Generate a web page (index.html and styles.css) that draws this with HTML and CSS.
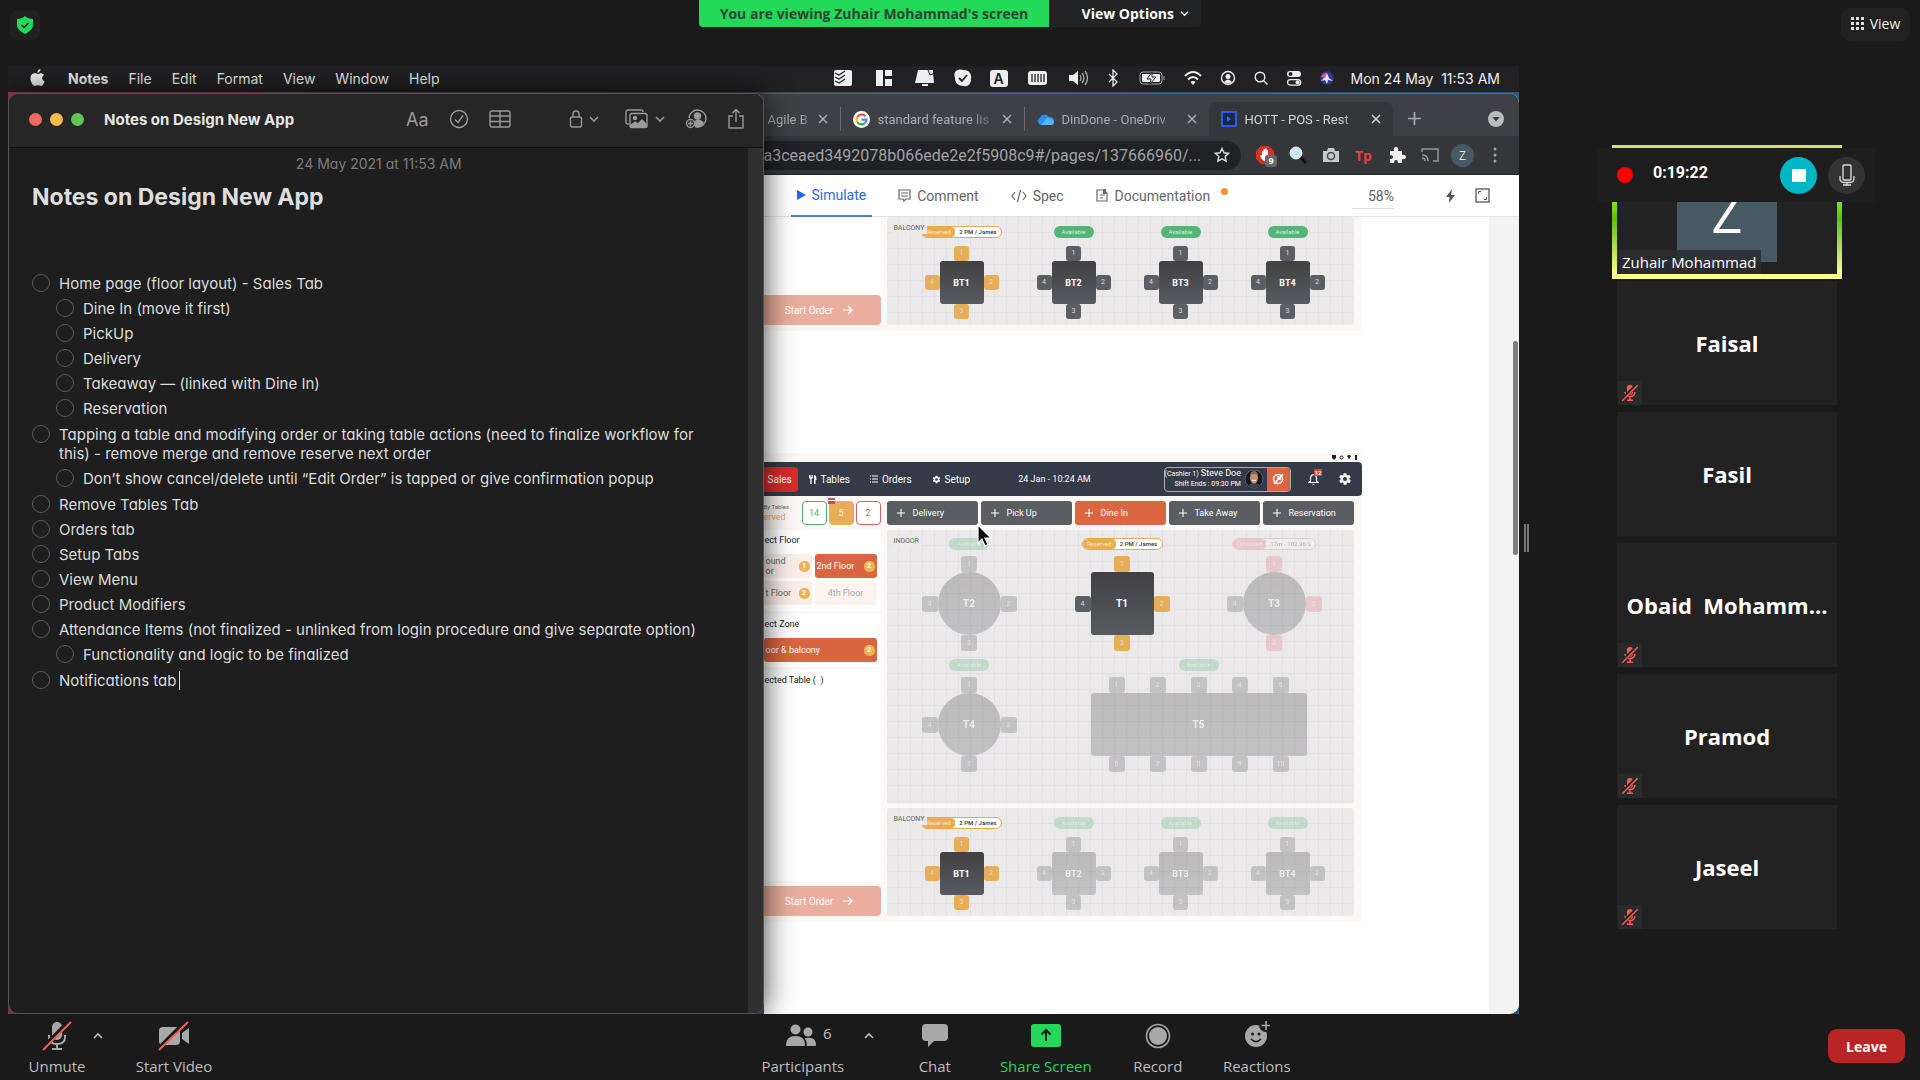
FILE: index.html
```html
<!DOCTYPE html>
<html lang="en">
<head>
<meta charset="utf-8">
<title>Meeting</title>
<link rel="stylesheet" href="styles.css">
</head>
<body>
<svg class="defs" aria-hidden="true">
  <symbol id="mic-off" viewBox="0 0 16 16"><rect x="5" y="0" width="6" height="10" rx="3" fill="#ff5c5c"/><path d="M3 7c0 6 10 6 10 0M8 12v3M5 15.200h6" stroke="#ff5c5c" stroke-width="1.500" fill="none"/><path d="M0 15L15 0" stroke="#242424" stroke-width="4"/><path d="M0 16L16 0" stroke="#ff5c5c" stroke-width="1.500"/></symbol>
  <symbol id="gear" viewBox="0 0 24 24"><path fill="currentColor" fill-rule="evenodd" d="M19.400 13a7.500 7.500 0 0 0 0-2l2.100-1.600a.5.5 0 0 0 .1-.7l-2-3.400a.5.5 0 0 0-.6-.2l-2.500 1a7 7 0 0 0-1.700-1l-.4-2.700A.5.5 0 0 0 14 2h-4a.5.5 0 0 0-.5.400l-.4 2.700a7 7 0 0 0-1.700 1l-2.500-1a.5.5 0 0 0-.6.200l-2 3.400a.5.5 0 0 0 .1.700L4.600 11a7.500 7.500 0 0 0 0 2l-2.100 1.600a.5.5 0 0 0-.1.700l2 3.400c.1.200.4.300.6.200l2.500-1a7 7 0 0 0 1.700 1l.4 2.700c0 .2.200.4.500.4h4c.3 0 .5-.2.500-.4l.4-2.700a7 7 0 0 0 1.700-1l2.500 1c.2.100.5 0 .6-.2l2-3.400a.5.5 0 0 0-.1-.7zM12 15.500a3.500 3.500 0 1 1 0-7 3.500 3.500 0 0 1 0 7z"/></symbol>
  <symbol id="down" viewBox="0 0 10 10"><path d="M1 3l4 4 4-4" fill="none" stroke="currentColor" stroke-width="1.600"/></symbol>
  <symbol id="up" viewBox="0 0 10 10"><path d="M1 7l4-4 4 4" fill="none" stroke="currentColor" stroke-width="1.600"/></symbol>
  <symbol id="close" viewBox="0 0 10 10"><path d="M1 1l8 8M9 1L1 9" stroke="currentColor" stroke-width="1.500"/></symbol>
  <symbol id="plus" viewBox="0 0 10 10"><path d="M5 0v10M0 5h10" stroke="currentColor" stroke-width="1.300"/></symbol>
  <symbol id="arrow" viewBox="0 0 10 10"><path d="M0 5h9M5 1l4 4-4 4" fill="none" stroke="currentColor" stroke-width="1.200"/></symbol>
</svg>

<header class="topbar">
  <button class="shield" aria-label="Meeting information"><svg width="16" height="18" viewBox="0 0 16 18"><path d="M8 0c2 2 5 3 8 3v6c0 4-4 7-8 9C4 16 0 13 0 9V3c3 0 6-1 8-3z" fill="#23d959"/><path d="M4.500 9l2.500 2.500L11.500 7" stroke="#1a1a1a" stroke-width="1.500" fill="none"/></svg></button>
  <div class="viewing">
    <span class="viewing-text">You are viewing Zuhair Mohammad's screen</span>
    <button class="viewing-options">View Options <svg width="9" height="9"><use href="#down"/></svg></button>
  </div>
  <button class="view-btn"><svg width="13" height="13" viewBox="0 0 13 13" fill="#ddd"><path d="M0 0h3v3H0zM5 0h3v3H5zM10 0h3v3h-3zM0 5h3v3H0zM5 5h3v3H5zM10 5h3v3h-3zM0 10h3v3H0zM5 10h3v3H5zM10 10h3v3h-3z"/></svg>View</button>
</header>

<main class="stage">
  <section class="desktop">
    <nav class="menubar">
      <svg width="15" height="18" viewBox="0 0 15 18" fill="#eee"><path d="M10.500 0c.1 2-1.400 3.700-3.200 3.700C7.200 2 8.700.3 10.500 0zM7.600 5c.8 0 1.700-.8 3.200-.8 1.200 0 2.400.6 3.200 1.700-2.700 1.600-2.300 5.300.7 6.500-.7 1.900-2.300 4.600-3.900 4.600-1.100 0-1.500-.7-2.900-.7s-1.900.7-2.900.7C3 17 .4 12.700.4 9.300.4 6 2.500 4.300 4.600 4.300 6 4.300 6.900 5 7.600 5z"/></svg>
      <a href="#" class="app-name">Notes</a><a href="#">File</a><a href="#">Edit</a><a href="#">Format</a><a href="#">View</a><a href="#">Window</a><a href="#">Help</a>
      <div class="tray">
        <svg width="22" height="18" viewBox="0 0 22 18"><rect x="2" y="1" width="18" height="16" rx="2" fill="#eee"/><path d="M3 4l4 2 6-4M3 8l4 2 6-4M3 12l4 2 6-4" stroke="#222" stroke-width="1.300" fill="none"/></svg>
        <svg width="24" height="18" viewBox="0 0 24 18" fill="#eee"><path d="M4 1h7v16H4zM13 1h7v6h-7zM13 10h7v7h-7z"/></svg>
        <svg width="22" height="18" viewBox="0 0 22 18" fill="#eee"><path d="M4 1h15v3l1 10H1zM8 15h6v2H8z"/><path d="M14 1l2 5 3-1" stroke="#222" fill="none"/></svg>
        <svg width="18" height="18" viewBox="0 0 18 18"><path d="M4 1c3-1 4 0 6 0 5 0 8 4 7 9 0 5-3 8-7 7-6 0-9-3-9-8C0 6 0 2 4 1z" fill="#eee"/><path d="M5 9l3 3 5-6" stroke="#222" stroke-width="1.800" fill="none"/></svg>
        <span class="tray-a">A</span>
        <svg width="24" height="18" viewBox="0 0 24 18"><rect x="2" y="2" width="19" height="14" rx="3" fill="#eee"/><path d="M6 5v8M9 5v8M12 5v8M15 5v8M18 5v8" stroke="#222" stroke-width="1.300"/></svg>
        <svg width="20" height="18" viewBox="0 0 20 18"><path d="M1 6h4l5-4v14l-5-4H1z" fill="#eee"/><path d="M12 6q2 3 0 6M14 4q4 5 0 10M17 2q5 7 0 14" stroke="#aaa" stroke-width="1.300" fill="none"/></svg>
        <svg width="14" height="18" viewBox="0 0 14 18"><path d="M3 5l8 8-4 4V1l4 4-8 8" stroke="#eee" stroke-width="1.300" fill="none"/></svg>
        <svg width="28" height="18" viewBox="0 0 28 18"><rect x="2" y="3" width="22" height="12" rx="3" stroke="#aaa" fill="none"/><rect x="4" y="5" width="18" height="8" rx="1" fill="#eee"/><path d="M14 3l-5 7h4l-1 5 6-7h-4z" fill="#eee" stroke="#222"/><path d="M26 7v4" stroke="#aaa"/></svg>
        <svg width="18" height="18" viewBox="0 0 18 18"><path d="M1 7q8-8 16 0M4 10.500q5-5 10 0" stroke="#eee" stroke-width="2" fill="none"/><path d="M6.500 13q2.500-2 5 0L9 16z" fill="#eee"/></svg>
        <svg width="16" height="18" viewBox="0 0 16 18"><circle cx="8" cy="9" r="6.500" stroke="#eee" stroke-width="1.400" fill="none"/><circle cx="8" cy="7.500" r="2.500" fill="#eee"/><path d="M4 13q4-5 8 0-4 3-8 0z" fill="#eee"/></svg>
        <svg width="14" height="18" viewBox="0 0 14 18"><circle cx="6" cy="8" r="4.800" stroke="#eee" stroke-width="1.400" fill="none"/><path d="M9.500 11.500l4 4" stroke="#eee" stroke-width="1.500"/></svg>
        <svg width="16" height="18" viewBox="0 0 16 18"><rect x="1" y="2" width="14" height="6" rx="3" fill="#eee"/><rect x="1.600" y="10.600" width="13" height="5.500" rx="2.700" fill="none" stroke="#eee" stroke-width="1.300"/><circle cx="4.500" cy="5" r="2" fill="#222"/><circle cx="11.500" cy="13.300" r="2" fill="#eee"/></svg>
        <svg width="14" height="18" viewBox="0 0 14 18"><circle cx="7" cy="9" r="6.800" fill="#36358c"/><path d="M7 4l2 5 4 3-5-1-1 4-2-4-4 1 4-4z" fill="#d5ecff"/><path d="M1 8q3-5 6-4L5 9z" fill="#d658a5"/></svg>
      </div>
      <span class="clock">Mon 24 May&nbsp; 11:53 AM</span>
    </nav>

    <div class="windows">
      <article class="notes">
        <header class="notes-bar">
          <i class="light red"></i><i class="light amber"></i><i class="light green"></i>
          <h1>Notes on Design New App</h1>
          <div class="notes-tools">
            <button class="format">Aa</button>
            <button aria-label="Checklist"><svg width="20" height="20" viewBox="0 0 20 20" fill="none" stroke="currentColor" stroke-width="1.400"><circle cx="10" cy="10" r="8.500"/><path d="M6 10.500l3 3 5-7"/></svg></button>
            <button class="table-tool" aria-label="Table"><svg width="22" height="18" viewBox="0 0 22 18" fill="none" stroke="currentColor" stroke-width="1.400"><rect x="1" y="1" width="20" height="16" rx="2"/><path d="M1 6h20M1 11.500h20M11 1v16"/></svg></button>
            <button class="lock-tool" aria-label="Lock"><svg width="14" height="20" viewBox="0 0 14 20" fill="none" stroke="currentColor" stroke-width="1.400"><rect x="1.500" y="8" width="11" height="10" rx="1.500"/><path d="M4 8V5q0-3 3-3t3 3v3"/></svg><svg width="10" height="10"><use href="#down"/></svg></button>
            <button aria-label="Media"><svg width="24" height="20" viewBox="0 0 24 20" fill="none" stroke="currentColor" stroke-width="1.400"><path d="M4 15H3q-2 0-2-2V3q0-2 2-2h13q2 0 2 2"/><rect x="5" y="4.500" width="17" height="14" rx="2"/><circle cx="10" cy="9" r="1.500" fill="currentColor"/><path d="M6 16l4-3 3 2 4-4 4 4v3H6z" fill="currentColor"/></svg><svg width="10" height="10"><use href="#down"/></svg></button>
            <button aria-label="Share note"><svg width="22" height="20" viewBox="0 0 22 20" fill="none" stroke="currentColor" stroke-width="1.400"><path d="M4 9a8.500 8.500 0 1 1 8 9"/><circle cx="12.500" cy="7" r="3" fill="currentColor"/><path d="M10 16q-1-4 3-5 4 1 5 3-3 4-7 4z" fill="currentColor"/><circle cx="5.500" cy="14.500" r="4"/><path d="M5.500 12v5M3 14.500h5"/></svg></button>
            <button aria-label="Export"><svg width="18" height="22" viewBox="0 0 18 22" fill="none" stroke="currentColor" stroke-width="1.400"><path d="M6 8H2v12h14V8h-4M9 14V1.500M5.500 5L9 1.500 12.500 5"/></svg></button>
          </div>
        </header>
        <div class="notes-page">
          <time>24 May 2021 at 11:53 AM</time>
          <h2>Notes on Design New App</h2>
          <ul class="checklist">
            <li>Home page (floor layout) - Sales Tab</li>
            <li class="sub">Dine In (move it first)</li>
            <li class="sub">PickUp</li>
            <li class="sub">Delivery</li>
            <li class="sub">Takeaway — (linked with Dine In)</li>
            <li class="sub last">Reservation</li>
            <li>Tapping a table and modifying order or taking table actions (need to finalize workflow for<br>this) - remove merge and remove reserve next order</li>
            <li class="sub last">Don’t show cancel/delete until “Edit Order” is tapped or give confirmation popup</li>
            <li>Remove Tables Tab</li>
            <li>Orders tab</li>
            <li>Setup Tabs</li>
            <li>View Menu</li>
            <li>Product Modifiers</li>
            <li>Attendance Items (not finalized - unlinked from login procedure and give separate option)</li>
            <li class="sub last">Functionality and logic to be finalized</li>
            <li><span class="caret">Notifications tab</span></li>
          </ul>
        </div>
      </article>

      <article class="browser">
        <div class="tabs">
          <div class="tab first"><span>Agile B</span><svg width="10" height="10"><use href="#close"/></svg></div>
          <div class="tab"><svg width="17" height="17" viewBox="0 0 18 18"><circle cx="9" cy="9" r="9" fill="#fff"/><g fill="none" stroke-width="2.300"><path d="M13 5.500A5.200 5.200 0 0 0 4.600 6.300" stroke="#ea4335"/><path d="M4.600 6.300a5.200 5.200 0 0 0 0 5.400" stroke="#fbbc05"/><path d="M4.600 11.700a5.200 5.200 0 0 0 8 1.100" stroke="#34a853"/><path d="M12.600 12.800a5.200 5.200 0 0 0 1.600-3.600H9" stroke="#4285f4"/></g></svg><span>standard feature lis</span><svg width="10" height="10"><use href="#close"/></svg></div>
          <div class="tab"><svg width="17" height="12" viewBox="0 0 17 12"><path d="M4 12a4 4 0 0 1-1-7.500A5 5 0 0 1 12 4a4 4 0 0 1 2 8z" fill="#2a8fe6"/><path d="M4 12L10 5q5 0 7 4 0 3-3 3z" fill="#57b4f5"/></svg><span>DinDone - OneDriv</span><svg width="10" height="10"><use href="#close"/></svg></div>
          <div class="tab active"><svg width="16" height="16" viewBox="0 0 16 16"><rect x="1" y="1" width="14" height="14" fill="#1b2747" stroke="#2f5be8" stroke-width="2"/><path d="M6 5l4 3-4 3z" fill="#2f6bff"/></svg><span>HOTT - POS - Rest</span><svg width="10" height="10"><use href="#close"/></svg></div>
          <button class="new-tab" aria-label="New tab"><svg width="13" height="13" viewBox="0 0 10 10"><use href="#plus"/></svg></button>
          <svg class="tab-menu" width="16" height="16" viewBox="0 0 16 16"><circle cx="8" cy="8" r="8" fill="#b9babd"/><path d="M4.500 6h7L8 10.500z" fill="#35363a"/></svg>
        </div>
        <div class="address">
          <div class="url"><span>a3ceaed3492078b066ede2e2f5908c9#/pages/137666960/...</span><svg width="16" height="16" viewBox="0 0 16 16"><path d="M8 1.500l2 4.300 4.600.5-3.400 3.200.9 4.700L8 11.900l-4.100 2.300.9-4.700L1.400 6.300 6 5.800z" fill="none" stroke="#ddd" stroke-width="1.400"/></svg></div>
          <div class="extensions">
            <span class="blocker"><svg width="18" height="18" viewBox="0 0 18 18"><path d="M5 0h8l5 5v8l-5 5H5l-5-5V5z" fill="#d33322"/><path d="M6 9V5h1.500V3H9v-.5h1.500V4H12v8q-1 3-4 3-2-1-4-5l1-1z" fill="#fff"/></svg><b>9</b></span>
            <svg width="18" height="18" viewBox="0 0 18 18"><path d="M11 11l6 6" stroke="#111" stroke-width="3"/><circle cx="7" cy="7" r="6" fill="#cfe6f3" stroke="#eee"/></svg>
            <svg width="18" height="18" viewBox="0 0 18 18"><path d="M1 5h4l1-3h6l1 3h4v11H1z" fill="#c9c9cb"/><circle cx="9" cy="10" r="3.500" fill="none" stroke="#444" stroke-width="1.500"/></svg>
            <b class="tp">Tp</b>
            <svg width="18" height="18" viewBox="0 0 18 18"><path d="M2 5h4q-1-4 2-4t2 4h4v4q4-1 4 2t-4 2v4h-4q0-3-2-3t-2 3H2v-4q3 0 3-2T2 9z" fill="#f1f1f1"/></svg>
            <svg width="18" height="18" viewBox="0 0 18 18" fill="none" stroke="#96979b" stroke-width="1.500"><path d="M1 6V3h16v12h-5M1 9q6 0 6 6M1 12q3 0 3 3"/></svg>
            <span class="profile">Z</span>
            <svg width="18" height="18" viewBox="0 0 18 18" fill="#a5a6aa"><circle cx="9" cy="3" r="1.500"/><circle cx="9" cy="9" r="1.500"/><circle cx="9" cy="15" r="1.500"/></svg>
          </div>
        </div>
        <nav class="modes">
          <a href="#" class="mode on"><svg width="9" height="10" viewBox="0 0 9 10"><path d="M0 0l9 5-9 5z" fill="#2367f2"/></svg>Simulate</a>
          <a href="#" class="mode"><svg width="13" height="13" viewBox="0 0 13 13" fill="none" stroke="#666" stroke-width="1.200"><path d="M1 1h11v9H8l-2 2-1-2H1zM3 4h7M3 7h7"/></svg>Comment</a>
          <a href="#" class="mode"><svg width="16" height="12" viewBox="0 0 16 12" fill="none" stroke="#666" stroke-width="1.200"><path d="M4 2L1 6l3 4M12 2l3 4-3 4M9.500 0l-3 12"/></svg>Spec</a>
          <a href="#" class="mode docs"><svg width="13" height="13" viewBox="0 0 13 13" fill="none" stroke="#666" stroke-width="1.200"><path d="M1 1h7l3 3v8H1zM4 6h5M4 9h3"/><path d="M7 0h3v5H7z" fill="#666" stroke="none"/></svg>Documentation</a>
          <span class="zoom">58%</span>
          <svg width="9" height="14" viewBox="0 0 9 14"><path d="M6 0L0 8h3.500L3 14l6-8H5z" fill="#555"/></svg>
          <svg width="15" height="15" viewBox="0 0 15 15" fill="none"><rect x="1" y="1" width="13" height="13" stroke="#555" stroke-width="1.300"/><path d="M3.500 6V3.500H6M11.500 9v2.500H9" stroke="#555"/></svg>
        </nav>

        <div class="viewport">
          <div class="canvas">
            <section class="frame top-frame">
              <aside class="pos-side"><button class="start">Start Order <svg width="10" height="10"><use href="#arrow"/></svg></button></aside>
              <div class="floor balcony">
                <span class="zone-name">BALCONY</span>
                <div class="table small reserved bt1"><span class="tag booked"><b>Reserved</b><em>2 PM / James</em></span><i class="n">1</i><i class="w">4</i><strong>BT1</strong><i class="e">2</i><i class="s">3</i></div>
                <div class="table small bt2"><span class="tag">Available</span><i class="n">1</i><i class="w">4</i><strong>BT2</strong><i class="e">2</i><i class="s">3</i></div>
                <div class="table small bt3"><span class="tag">Available</span><i class="n">1</i><i class="w">4</i><strong>BT3</strong><i class="e">2</i><i class="s">3</i></div>
                <div class="table small bt4"><span class="tag">Available</span><i class="n">1</i><i class="w">4</i><strong>BT4</strong><i class="e">2</i><i class="s">3</i></div>
              </div>
            </section>

            <section class="pos">
              <div class="status"><svg width="26" height="5" viewBox="0 0 26 5" fill="#222"><path d="M0 0h4v3L2 5 0 3zM15 1q2-2 4 0l-2 3zM23 0h2v5h-2z"/><circle cx="9.500" cy="2.500" r="1.500" fill="none" stroke="#222"/></svg></div>
              <header class="pos-head">
                <a href="#" class="sales">Sales</a>
                <a href="#"><svg width="8" height="9" viewBox="0 0 8 9" fill="#fff"><path d="M0 0h1v2h.5V0h1v2H3V0h.8v3L2.600 4v5H1.300V4L0 3zM5 0q2.500 0 2.500 5H6.500v4H5z"/></svg>Tables</a>
                <a href="#"><svg width="8" height="8" viewBox="0 0 8 8" stroke="#fff"><path d="M0 1h1M2 1h6M0 4h1M2 4h6M0 7h1M2 7h6"/></svg>Orders</a>
                <a href="#"><svg width="9" height="9"><use href="#gear"/></svg>Setup</a>
                <span class="date">24 Jan - 10:24 AM</span>
                <div class="cashier">
                  <p><small>(Cashier 1)</small> Steve Doe<br><small>Shift Ends : 09:30 PM</small></p>
                  <svg width="20" height="20" viewBox="0 0 20 20"><circle cx="10" cy="10" r="9" fill="#15171c" stroke="#5c6672"/><path d="M3 17q7-6 14 0-7 4-14 0z" fill="#3b3f46"/><ellipse cx="10" cy="9" rx="4" ry="5.500" fill="#c58f74"/><path d="M6 7q0-5 4-5t4 5q-1-2-4-2T6 7z" fill="#8e6350"/><path d="M8 11q2 2 4 0" stroke="#fff" fill="none"/></svg>
                  <button aria-label="Clock out"><svg width="12" height="12" viewBox="0 0 12 12" fill="none" stroke="#fff" stroke-width="1.500"><circle cx="6" cy="6" r="4.500"/><path d="M2 11L11 1M6 3v3h3"/></svg></button>
                </div>
                <span class="bell"><svg width="11" height="12" viewBox="0 0 11 12" fill="none" stroke="#fff" stroke-width="1.200"><path d="M1 9.500h9L8.500 8V5q0-3-3-3.500-3 .5-3 3.500v3zM4.500 11.300h2"/></svg><b>12</b></span>
                <svg width="14" height="14"><use href="#gear"/></svg>
              </header>
              <div class="pos-body">
                <aside class="pos-side">
                  <div class="counts"><p><small>By Tables</small><br><span>erved</span></p><b class="free">14</b><b class="held">5</b><b class="busy">2</b></div>
                  <div class="card floors">
                    <h3>ect Floor</h3>
                    <div class="floor-grid"><button class="pick two"><span>ound<br>or</span><b>1</b></button><button class="pick on"><span>2nd Floor</span><b>2</b></button><button class="pick"><span>t Floor</span><b>2</b></button><button class="pick off"><span>4th Floor</span></button></div>
                  </div>
                  <div class="card zones"><h3>ect Zone</h3><button class="pick on"><span>oor &amp; balcony</span><b>2</b></button></div>
                  <div class="card selected"><h3>ected Table ( &nbsp;)</h3></div>
                  <button class="start">Start Order <svg width="10" height="10"><use href="#arrow"/></svg></button>
                </aside>
                <div class="pos-main">
                  <div class="types"><button><svg width="8" height="8" viewBox="0 0 10 10"><use href="#plus"/></svg>Delivery</button><button><svg width="8" height="8" viewBox="0 0 10 10"><use href="#plus"/></svg>Pick Up</button><button class="on"><svg width="8" height="8" viewBox="0 0 10 10"><use href="#plus"/></svg>Dine In</button><button><svg width="8" height="8" viewBox="0 0 10 10"><use href="#plus"/></svg>Take Away</button><button><svg width="8" height="8" viewBox="0 0 10 10"><use href="#plus"/></svg>Reservation</button></div>
                  <div class="floor indoor">
                    <span class="zone-name">INDOOR</span>
                    <div class="table round faded t2"><span class="tag">Available</span><i class="n">1</i><i class="w">4</i><strong>T2</strong><i class="e">2</i><i class="s">3</i></div>
                    <div class="table reserved t1"><span class="tag booked"><b>Reserved</b><em>2 PM / James</em></span><i class="n">1</i><i class="w grey">4</i><strong>T1</strong><i class="e">2</i><i class="s">3</i></div>
                    <div class="table round faded occupied t3"><span class="tag booked"><b>Occupied</b><em>17m - 102.96 $</em></span><i class="n">1</i><i class="w grey">4</i><strong>T3</strong><i class="e">2</i><i class="s">3</i></div>
                    <div class="table round faded t4"><span class="tag">Available</span><i class="n">1</i><i class="w">4</i><strong>T4</strong><i class="e">2</i><i class="s">3</i></div>
                    <div class="long faded t5"><span class="tag">Available</span><div class="row"><i>1</i><i>2</i><i>3</i><i>4</i><i>5</i></div><strong>T5</strong><div class="row"><i>6</i><i>7</i><i>8</i><i>9</i><i>10</i></div></div>
                  </div>
                  <div class="floor balcony">
                    <span class="zone-name">BALCONY</span>
                    <div class="table small reserved bt1"><span class="tag booked"><b>Reserved</b><em>2 PM / James</em></span><i class="n">1</i><i class="w">4</i><strong>BT1</strong><i class="e">2</i><i class="s">3</i></div>
                    <div class="table small faded bt2"><span class="tag">Available</span><i class="n">1</i><i class="w">4</i><strong>BT2</strong><i class="e">2</i><i class="s">3</i></div>
                    <div class="table small faded bt3"><span class="tag">Available</span><i class="n">1</i><i class="w">4</i><strong>BT3</strong><i class="e">2</i><i class="s">3</i></div>
                    <div class="table small faded bt4"><span class="tag">Available</span><i class="n">1</i><i class="w">4</i><strong>BT4</strong><i class="e">2</i><i class="s">3</i></div>
                  </div>
                </div>
              </div>
              <svg class="pointer" width="16" height="24" viewBox="0 0 16 24"><path d="M1 1v18l4-4 3 7 3-1.500-3-6.500h6z" fill="#000" stroke="#fff" stroke-width="1.200"/></svg>
            </section>
          </div>
          <div class="gutter"><i class="thumb"></i></div>
        </div>
      </article>
    </div>
  </section>

  <aside class="people">
    <i class="grip"></i>
    <div class="tile speaking"><div class="speaking-inner"><span class="avatar">Z</span><span class="name-tag">Zuhair Mohammad</span></div>
      <div class="recorder"><i class="dot"></i><span>0:19:22</span><button class="stop" aria-label="Stop recording"><i></i></button><button class="rec-mic" aria-label="Microphone"><svg width="16" height="22" viewBox="0 0 16 22" fill="none" stroke="#ddd" stroke-width="1.300"><rect x="4" y="1" width="8" height="15" rx="1"/><path d="M1 12v3q0 3 4 3.500h6q4-.5 4-3.500v-3M8 18.500v2.500M4 21h8"/></svg></button></div>
    </div>
    <div class="tile">Faisal<span class="muted"><svg width="16" height="16"><use href="#mic-off"/></svg></span></div>
    <div class="tile">Fasil</div>
    <div class="tile">Obaid&nbsp; Mohamm...<span class="muted"><svg width="16" height="16"><use href="#mic-off"/></svg></span></div>
    <div class="tile">Pramod<span class="muted"><svg width="16" height="16"><use href="#mic-off"/></svg></span></div>
    <div class="tile">Jaseel<span class="muted"><svg width="16" height="16"><use href="#mic-off"/></svg></span></div>
  </aside>
</main>

<footer class="controls">
  <div class="group audio">
    <button class="ctl unmute"><svg width="30" height="30" viewBox="0 0 30 30"><rect x="10" y="1" width="10" height="18" rx="5" fill="#a8a8a8"/><path d="M7 14v2q0 7 8 7t8-7v-2M15 23v4M10 28h10" fill="none" stroke="#a8a8a8" stroke-width="2"/><path d="M0 28L27 0" stroke="#1a1a1a" stroke-width="4"/><path d="M1 29L29 1" stroke="#ff5c5c" stroke-width="2"/></svg>Unmute</button>
    <button class="more" aria-label="Audio options"><svg width="10" height="10"><use href="#up"/></svg></button>
    <button class="ctl video"><svg width="32" height="30" viewBox="0 0 32 30"><rect x="1" y="6" width="21" height="18" rx="4" fill="#a8a8a8"/><path d="M24 12l7-5v16l-7-5z" fill="#a8a8a8"/><path d="M1 27L28 0" stroke="#1a1a1a" stroke-width="4"/><path d="M1 29L30 1" stroke="#ff5c5c" stroke-width="2"/></svg>Start Video</button>
  </div>
  <div class="group middle">
    <button class="ctl participants"><span class="count"><svg width="30" height="30" viewBox="0 0 30 30" fill="#a8a8a8"><circle cx="9.500" cy="8.500" r="5"/><path d="M0 24q0-9 9.500-9T19 24q0 1-1 1H1q-1 0-1-1z"/><circle cx="22" cy="11" r="4.500"/><path d="M20 17q10-2 10 7 0 1-1 1h-8.500q1-5-2-7.500z"/></svg>6</span>Participants</button>
    <button class="more" aria-label="Participant options"><svg width="10" height="10"><use href="#up"/></svg></button>
    <button class="ctl chat"><svg width="26" height="30" viewBox="0 0 26 30" fill="#a8a8a8"><path d="M4 3h18q4 0 4 4v9q0 4-4 4H12l-6 6v-6H4q-4 0-4-4V7q0-4 4-4z"/></svg>Chat</button>
    <button class="ctl share"><svg width="30" height="30" viewBox="0 0 30 30"><rect y="3" width="30" height="23" rx="3" fill="#23d959"/><path d="M15 20V9M10.500 13.500L15 9l4.500 4.500" fill="none" stroke="#1a1a1a" stroke-width="2"/></svg>Share Screen</button>
    <button class="ctl record"><svg width="26" height="30" viewBox="0 0 26 30"><circle cx="13" cy="15" r="11.500" fill="none" stroke="#a8a8a8" stroke-width="1.600"/><circle cx="13" cy="15" r="9" fill="#a8a8a8"/></svg>Record</button>
    <button class="ctl reactions"><svg width="26" height="30" viewBox="0 0 26 30"><circle cx="12" cy="15" r="11" fill="#a8a8a8"/><circle cx="22" cy="4" r="7" fill="#1a1a1a"/><path d="M22 0v9M17.500 4.500h9" stroke="#a8a8a8" stroke-width="1.600"/><circle cx="8.500" cy="13" r="1.500" fill="#1a1a1a"/><circle cx="15" cy="13" r="1.500" fill="#1a1a1a"/><path d="M7 18q5 5 10 0" fill="none" stroke="#1a1a1a" stroke-width="1.700"/></svg>Reactions</button>
  </div>
  <button class="leave">Leave</button>
</footer>
</body>
</html>
```

FILE: styles.css
```css
*, *::before, *::after { box-sizing: border-box; }
body {
  margin: 0;
  min-height: 100vh;
  display: grid;
  grid-template-rows: 66px 1fr 66px;
  background: #1a1a1a;
  color: #eee;
  font-family: "Open Sans", "Noto Sans", sans-serif;
  font-size: 15px;
}
button { font: inherit; color: inherit; background: none; border: 0; padding: 0; margin: 0; }
a { color: inherit; text-decoration: none; }
h1, h2, h3, p, ul { margin: 0; padding: 0; }
i, em { font-style: normal; }
svg { display: block; flex: none; }
.defs { position: absolute; width: 0; height: 0; }

/* top bar */
.topbar { display: grid; grid-template-columns: 1fr auto 1fr; align-items: start; padding: 0 10px; }
.shield { width: 30px; height: 30px; margin-top: 10px; border-radius: 8px; background: #212121; display: grid; place-items: center; }
.viewing { display: flex; height: 27px; line-height: 27px; font-size: 14px; font-weight: 700; margin-right: 20px; }
.viewing-text { width: 350px; text-align: center; background: #23d959; color: #2d4434; border-bottom-left-radius: 4px; }
.viewing-options { width: 152px; display: flex; align-items: center; justify-content: flex-end; gap: 6px; padding-right: 12px; background: #222325; color: #fff; border-bottom-right-radius: 4px; }
.view-btn { justify-self: end; width: 69px; height: 33px; margin-top: 8px; padding-bottom: 3px; border-radius: 9px; background: #212121; display: flex; align-items: center; justify-content: center; gap: 6px; font-size: 14px; }

/* stage */
.stage { display: grid; grid-template-columns: minmax(0, 1fr) 401px; padding-left: 8px; }
.desktop { display: flex; flex-direction: column; background: linear-gradient(90deg, #a3405f, #3d4c63 50%, #24598f); overflow: hidden; }

.menubar { height: 26px; margin-bottom: 1px; padding: 0 19px 2px 22px; display: flex; align-items: center; gap: 20px; background: #212123; font-family: Inter, sans-serif; font-size: 14px; white-space: nowrap; }
.app-name { font-weight: 700; margin-left: 3px; }
.tray { display: flex; align-items: center; gap: 18px; margin-left: auto; }
.tray-a { width: 18px; height: 17px; line-height: 17px; text-align: center; background: #eee; color: #222; border-radius: 3px; font-weight: 600; }
.clock { margin-left: -3px; }

.windows { flex: 1; display: grid; grid-template-columns: 1fr 1fr; }

/* notes */
.notes { position: relative; z-index: 2; display: flex; flex-direction: column; background: #1e1e1e; border: 1px solid #555; border-radius: 10px; box-shadow: 0 0 30px rgba(0, 0, 0, .75); font-family: Inter, sans-serif; overflow: hidden; }
.notes-bar { height: 54px; display: flex; align-items: center; padding: 0 18px 3px 20px; background: #262626; border-bottom: 1px solid #111; }
.light { width: 13px; height: 13px; border-radius: 50%; margin-right: 8px; }
.red { background: #ee6a5f; }
.amber { background: #f5bd4f; }
.green { background: #61c454; }
.notes-bar h1 { margin-left: 12px; font-size: 15px; font-weight: 700; color: #e6e6e6; white-space: nowrap; }
.notes-tools { margin-left: auto; display: flex; align-items: center; gap: 20px; color: #9a9a9a; }
.notes-tools button { display: flex; align-items: center; gap: 6px; }
.notes-tools .format { font-size: 18px; }
.notes-tools .table-tool { margin-right: 38px; }
.notes-tools .lock-tool { margin-right: 6px; }
.notes-page { flex: 1; padding: 6px 22px 0 23px; border-right: 15px solid #303030; font-feature-settings: "cv11"; }
.notes-page time { display: block; text-align: center; font-size: 14px; line-height: 20px; color: #7d7d7d; }
.notes-page h2 { margin-top: 8px; font-size: 23px; line-height: 30px; font-weight: 700; color: #dedede; }
.checklist { list-style: none; margin-top: 62px; display: flex; flex-direction: column; gap: 6px; font-size: 15px; line-height: 19px; color: #dcdcdc; }
.checklist li { display: flex; white-space: nowrap; }
.checklist li::before { content: ""; width: 18px; height: 18px; margin-right: 9px; flex: none; border: 1px solid #5a5a5a; border-radius: 50%; }
.checklist .sub { padding-left: 24px; }
.checklist .last { margin-bottom: 1px; }
.caret { border-right: 1px solid #ddd; padding-right: 3px; }

/* browser */
.browser { display: flex; flex-direction: column; min-width: 0; background: #fff; border-radius: 0 10px 10px 0; overflow: hidden; }
.tabs { height: 43px; display: flex; align-items: flex-end; background: #3f4045; border-top: 1px solid #5c6168; font-family: Roboto, sans-serif; font-size: 13px; color: #a9abb0; }
.tab { position: relative; width: 184px; height: 34px; padding: 0 12px; display: flex; align-items: center; gap: 8px; }
.tab span { flex: 1; white-space: nowrap; -webkit-mask-image: linear-gradient(90deg, #000 80%, rgba(0, 0, 0, .2)); mask-image: linear-gradient(90deg, #000 80%, rgba(0, 0, 0, .2)); }
.tab.first { width: 77px; padding-left: 4px; }
.tab:not(.active) { height: 24px; margin-bottom: 5px; }
.tab:not(.active):not(:nth-child(3)) { border-right: 1px solid #6b6c71; }
.tab.active { border-radius: 8px 8px 0 0; background: #35363a; color: #d5d6d9; }
.new-tab { margin: 0 0 11px 15px; }
.tab-menu { margin: 0 15px 9px auto; }
.address { height: 39px; display: flex; align-items: center; background: #35363a; border-bottom: 1px solid #222; }
.url { flex: 1; height: 29px; padding: 0 11px 0 0; display: flex; align-items: center; justify-content: space-between; border-radius: 0 15px 15px 0; background: #202124; font: 16px Roboto, sans-serif; color: #a2a4a8; white-space: nowrap; min-width: 0; }
.extensions { display: flex; align-items: center; gap: 15px; padding: 0 15px 0 15px; }
.extensions > * { width: 18px; }
.blocker { position: relative; }
.blocker b { position: absolute; left: 9px; top: 9px; width: 12px; height: 12px; line-height: 12px; border-radius: 3px; background: #66676b; font-size: 9px; text-align: center; color: #fff; }
.tp { color: #e5404a; font: 700 14px "Open Sans", sans-serif; }
.extensions .profile { width: 23px; height: 23px; margin: 0 -3px; line-height: 23px; text-align: center; border-radius: 50%; background: #455a64; font-size: 12px; color: #ddd; }
.modes { height: 42px; display: flex; align-items: center; gap: 20px; padding: 0 29px 0 27px; background: #fff; border-bottom: 1px solid #e3e3e3; font: 14px Roboto, sans-serif; color: #666; position: relative; z-index: 1; }
.mode { height: 42px; display: flex; align-items: center; gap: 6px; padding: 0 6px; }
.mode.on { color: #2f67ee; border-bottom: 2px solid #4b7bf0; }
.docs::after { content: ""; width: 7px; height: 7px; border-radius: 50%; background: #f58f32; margin: 0 0 8px 5px; }
.zoom { margin: 0 32px 0 auto; height: 26px; line-height: 26px; padding-left: 16px; border-bottom: 1px solid #ddd; }

.viewport { flex: 1; display: flex; }
.canvas { flex: 1; min-width: 0; background: #fefefe; font-family: Roboto, sans-serif; }
.gutter { width: 30px; background: #f3f3f3; padding: 124px 1px 0 0; }
.thumb { display: block; width: 5px; height: 214px; margin-left: auto; border-radius: 3px; background: #7d7d7d; }

/* point of sale frames */
.frame, .pos { width: 598px; background: #fcf8f6; position: relative; }
.frame { display: flex; gap: 6px; padding-bottom: 6px; }
.frame .pos-side { background: #fff; justify-content: flex-end; }
.pos { margin-top: 122px; padding-bottom: 6px; }
.status { height: 9px; display: flex; justify-content: flex-end; padding: 2px 4px 0 0; }
.pos-head { height: 34px; display: flex; align-items: center; background: #323b47; border-radius: 0 4px 4px 0; padding-right: 10px; font-size: 10px; color: #fff; white-space: nowrap; }
.pos-head a { display: flex; align-items: center; gap: 4px; margin-right: 20px; }
.pos-head .sales { width: 34px; height: 25px; padding-left: 4px; margin-right: 11px; background: #d82c2c; border-radius: 0 3px 3px 0; }
.date { margin: 0 auto 0 28px; font-size: 9px; }
.cashier { width: 127px; height: 25px; display: flex; align-items: center; justify-content: flex-end; gap: 3px; border: 1px solid #a9aeb5; border-radius: 4px; }
.cashier p { font-size: 9px; line-height: 9px; text-align: right; }
.cashier small { font-size: 7px; }
.cashier button { width: 26px; height: 23px; display: grid; place-items: center; background: #dc6641; border-radius: 0 3px 3px 0; }
.bell { position: relative; margin: 0 19px 0 17px; }
.bell b { position: absolute; left: 6px; top: -4px; padding: 0 1px; line-height: 7px; font-size: 6px; background: #e13c30; }

.pos-body { display: flex; gap: 6px; padding-top: 5px; }
.pos-side { width: 117px; display: flex; flex-direction: column; color: #444; font-size: 9px; }
.counts { height: 24px; display: flex; gap: 2px; margin-bottom: 5px; }
.counts p { flex: 1; line-height: 11px; font-size: 9px; color: #eaaa50; white-space: nowrap; }
.counts small { font-size: 6px; color: #666; }
.counts b { width: 25px; line-height: 22px; text-align: center; font-weight: 400; border: 1px solid; border-radius: 4px; background: #fff; }
.free { color: #4daf75; }
.counts .held { position: relative; background: #e8ad57; color: #fff; border-color: #e8ad57; }
.held::before { content: ""; position: absolute; left: -2px; top: -4px; width: 7px; height: 6px; background: linear-gradient(#d04b4b 0 2px, #fff 2px 3px, #d04b4b 3px); }
.busy { color: #d26464; }
.card { background: #fff; margin-bottom: 3px; padding-right: 4px; }
.card h3 { padding: 5px 0 0 1px; height: 24px; font-size: 9px; line-height: 11px; font-weight: 400; color: #222; }
.floors { height: 81px; }
.zones { height: 53px; }
.selected { flex: 1; margin-bottom: 5px; }
.floor-grid { display: grid; grid-template-columns: 48px 62px; gap: 3px; }
.pick { width: 100%; height: 24px; padding: 0 2px; display: flex; align-items: center; justify-content: space-between; background: #fbede7; color: #666; border-radius: 3px; font-size: 9px; line-height: 10px; text-align: left; }
.pick b { width: 11px; height: 11px; line-height: 11px; border-radius: 5px; background: #ebb35c; color: #fff; font-size: 7px; text-align: center; }
.pick.on { background: #d96640; color: #fff; }
.pick.off { justify-content: center; color: #aaa; background: #fdf4f0; }
.start { height: 30px; display: flex; align-items: center; justify-content: center; gap: 10px; padding-right: 6px; background: #e9ae9d; color: #fff; border-radius: 0 4px 4px 0; font-size: 10px; }
.pos-main { width: 467px; }
.types { display: grid; grid-template-columns: repeat(5, 1fr); gap: 3px; margin-bottom: 5px; }
.types button { height: 24px; display: flex; align-items: center; gap: 8px; padding-left: 10px; background: #5a5d62; border-radius: 3px; font-size: 9px; color: #fff; }
.types .on { background: #dc6641; }

/* floor plan */
.floor { position: relative; width: 467px; border-radius: 3px; background: repeating-linear-gradient(90deg, transparent 0 11px, #e2e1e5 11px 12px), repeating-linear-gradient(#ebe9e9 0 15px, #e2e1e5 15px 16px); }
.indoor { height: 274px; margin-bottom: 4px; }
.balcony { height: 108px; }
.zone-name { position: absolute; z-index: 2; left: 4px; top: 5px; padding: 0 3px; line-height: 12px; font-size: 7px; color: #666; background: #ebe9e9; }
.table { position: absolute; display: grid; grid-template-columns: 16px 63px 16px; grid-template-rows: 18px 16px 63px 16px; justify-items: center; align-items: center; }
.table .n { grid-area: 2 / 2; }
.table .w { grid-area: 3 / 1; }
.table strong { grid-area: 3 / 2; }
.table .e { grid-area: 3 / 3; }
.table .s { grid-area: 4 / 2; }
.table .tag { grid-area: 1 / 1 / 2 / 4; }
.tag { align-self: start; height: 12px; line-height: 12px; width: 40px; text-align: center; border-radius: 6px; background: #55b478; color: #d8f0df; font-size: 6px; white-space: nowrap; }
.booked { width: 81px; display: flex; border: 1px solid #e8a850; line-height: 10px; background: #fff; color: #333; overflow: hidden; }
.booked b { width: 33px; background: #e8ad57; color: #fbe6c8; font-weight: 400; border-radius: 0 4px 4px 0; }
.booked em { flex: 1; font-weight: 500; }
.table i, .row i { width: 16px; height: 16px; line-height: 16px; text-align: center; border-radius: 3px; background: #5b5f65; color: #ddd; font-size: 7px; }
.table strong, .long strong { width: 100%; height: 100%; display: grid; place-items: center; border-radius: 3px; background: linear-gradient(#414042, #575b61); color: #fff; font-size: 10px; font-weight: 700; }
.table.round strong { border-radius: 50%; }
.table.reserved i { background: #e8ad57; }
.table.occupied i { background: #e67381; }
.table i.grey { background: #5b5f65; }
.occupied .booked { width: 84px; border-color: #e67381; }
.occupied .booked b { background: #e67381; }
.faded { opacity: .27; }
.small { top: 9px; grid-template-columns: 15px 44px 15px; grid-template-rows: 20px 15px 43px 15px; }
.table.small i { width: 15px; height: 15px; line-height: 15px; }
.table.small strong { font-size: 9px; }
.t2 { left: 35px; top: 8px; }
.t1 { left: 188px; top: 8px; }
.t3 { left: 340px; top: 8px; }
.t4 { left: 35px; top: 129px; }
.bt1 { left: 38px; }
.bt2 { left: 150px; }
.bt3 { left: 257px; }
.bt4 { left: 364px; }
.long { position: absolute; left: 204px; top: 129px; width: 216px; display: grid; grid-template-rows: 18px 16px 63px 16px; justify-items: center; }
.row { display: flex; gap: 25px; }
.pointer { position: absolute; left: 213px; top: 71px; z-index: 3; }

/* participants */
.people { position: relative; padding: 79px 0 0 98px; display: flex; flex-direction: column; gap: 7px; }
.grip { position: absolute; left: 5px; top: 458px; width: 5px; height: 28px; border: solid #777; border-width: 0 2px; }
.tile { position: relative; width: 220px; height: 124px; display: grid; place-items: center; background: #222; color: #fff; font-size: 22px; font-weight: 700; white-space: nowrap; }
.speaking { height: 134px; width: 230px; margin: 0 -5px -5px; padding: 5px; background: linear-gradient(#d3e36a, #83e016 43%, #5cc010 55%, #ffff90 97%); }
.speaking-inner { position: relative; width: 100%; height: 100%; display: grid; place-items: center; background: #222; }
.avatar { width: 100px; height: 100px; line-height: 100px; text-align: center; background: #475a64; font-size: 54px; font-weight: 400; }
.name-tag { position: absolute; left: 0; bottom: 0; padding: 0 5px; line-height: 24px; background: rgba(45, 45, 48, .85); font-size: 15px; font-weight: 400; }
.muted { position: absolute; left: 1px; bottom: 0; width: 24px; height: 24px; display: grid; place-items: center; background: #2a2a2a; }
.recorder { position: absolute; z-index: 2; left: -14px; top: 3px; width: 277px; height: 54px; padding: 0 10px 0 19px; display: flex; align-items: center; background: #1e1e1e; font: 700 16px Roboto, sans-serif; }
.dot { width: 16px; height: 16px; border-radius: 50%; background: #f00; margin-right: 20px; }
.recorder span { margin-bottom: 6px; }
.stop, .rec-mic { width: 37px; height: 37px; border-radius: 50%; display: grid; place-items: center; }
.stop { margin: 0 11px 0 auto; background: #00b7c7; }
.stop i { width: 14px; height: 13px; background: #fff; }
.rec-mic { background: #333; }

/* controls */
.controls { display: grid; grid-template-columns: 39% 1fr auto; align-items: start; color: #bdbdbd; }
.group { display: flex; }
.audio { padding-left: 22px; }
.middle { padding-left: 4px; gap: 24px; }
.ctl { display: flex; flex-direction: column; align-items: center; padding-top: 7px; gap: 5px; line-height: 20px; white-space: nowrap; }
.more { width: 12px; height: 44px; display: grid; place-items: center; }
.unmute { width: 70px; }
.video { width: 100px; margin-left: 20px; }
.participants { width: 100px; }
.middle .more { margin: 0 6px 0 -14px; }
.count { display: flex; gap: 7px; margin-left: 12px; line-height: 24px; }
.chat { width: 60px; }
.share { width: 114px; color: #23d959; }
.record { width: 62px; }
.reactions { width: 88px; }
.leave { width: 77px; height: 34px; margin: 15px 15px 0 0; border-radius: 9px; background: #b92525; color: #fff; font-size: 14px; font-weight: 700; }
```
